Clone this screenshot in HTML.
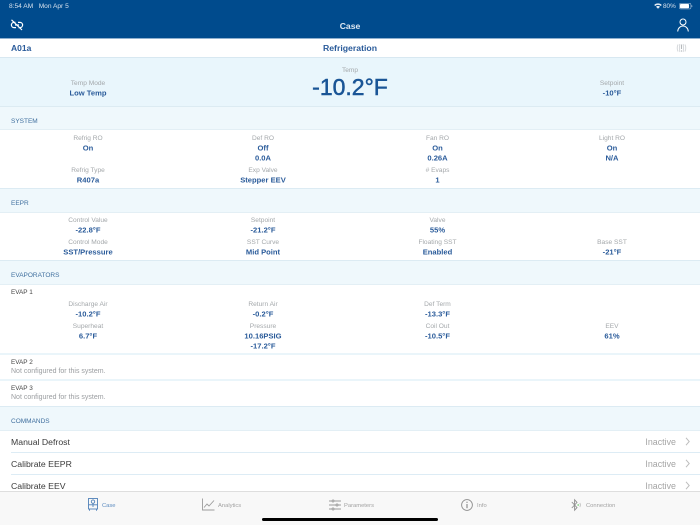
<!DOCTYPE html>
<html><head><meta charset="utf-8"><title>Case</title>
<style>
html,body{margin:0;padding:0;width:700px;height:525px;overflow:hidden;background:#fff}
body{position:relative;font-family:"Liberation Sans",sans-serif;filter:blur(.3px)}
.b{position:absolute;left:0;width:700px}
.t{position:absolute;white-space:nowrap;line-height:12px;height:12px}
.l{width:160px;margin-left:-80px;text-align:center;font-size:6.6px;color:#a4a8ab}
.v{width:160px;margin-left:-80px;text-align:center;font-size:7.6px;font-weight:bold;color:#2a5b9a;transform:translateY(.5px)}
.s{left:11px;font-size:6.5px;color:#41709f;transform:translateY(1px)}
.e{left:11px;font-size:6.4px;color:#444}
.n{left:11px;font-size:7px;color:#9a9da0}
.c{left:11px;font-size:8.7px;color:#3a3a3a}
.i{left:600px;width:76px;text-align:right;font-size:8.9px;color:#a5a5a5}
.tab{font-size:5.8px;color:#a2a2a2;transform:translateY(1px)}
svg{position:absolute;overflow:visible}
</style></head><body>
<div class="b" style="top:0;height:38px;background:#004b8d"></div>
<div class="b" style="top:38px;height:1px;background:#8fb0cf"></div>
<div class="b" style="top:39px;height:18px;background:#fff"></div>
<div class="b" style="top:57px;height:1px;background:#d8e8f1"></div>
<div class="b" style="top:58px;height:48px;background:#e9f6fc"></div>
<div class="b" style="top:106px;height:1px;background:#dcebf2"></div>
<div class="b" style="top:107px;height:22px;background:#eff8fc"></div>
<div class="b" style="top:129px;height:1px;background:#e3eff5"></div>
<div class="b" style="top:130px;height:58px;background:#fff"></div>
<div class="b" style="top:188px;height:1px;background:#dcebf3"></div>
<div class="b" style="top:189px;height:23px;background:#eff8fc"></div>
<div class="b" style="top:212px;height:1px;background:#e3eff5"></div>
<div class="b" style="top:260px;height:1px;background:#dcebf3"></div>
<div class="b" style="top:261px;height:23px;background:#eff8fc"></div>
<div class="b" style="top:284px;height:1px;background:#e3eff5"></div>
<div class="b" style="top:353px;height:2px;background:#eaf5fa"></div>
<div class="b" style="top:379px;height:2px;background:#eaf5fa"></div>
<div class="b" style="top:406px;height:1px;background:#dcebf3"></div>
<div class="b" style="top:407px;height:23px;background:#eff8fc"></div>
<div class="b" style="top:430px;height:1px;background:#e3eff5"></div>
<div class="b" style="top:452px;left:11px;width:689px;height:1px;background:#ddecf5"></div>
<div class="b" style="top:474px;left:11px;width:689px;height:1px;background:#ddecf5"></div>
<div class="b" style="top:491px;height:34px;background:#f8f8f8;border-top:1px solid #dedede;box-sizing:border-box"></div>

<!-- status bar -->
<div class="t" style="left:9px;top:0.5px;font-size:6.6px;color:#d5e0ec">8:54 AM&nbsp;&nbsp;&nbsp;Mon Apr 5</div>
<div class="t" style="left:663px;top:0.5px;font-size:6.4px;color:#d5e0ec">80%</div>
<svg style="left:654px;top:3px" width="8" height="6" viewBox="0 0 8 6"><path d="M0.2 2 A5.4 5.4 0 0 1 7.8 2 L6.8 3 A4 4 0 0 0 1.2 3Z M2 3.7 A2.8 2.8 0 0 1 6 3.7 L4 5.8Z" fill="#e4ebf3"/></svg>
<svg style="left:679px;top:3px" width="14" height="7" viewBox="0 0 14 7"><rect x=".3" y=".3" width="11.6" height="5.6" rx="1.4" fill="none" stroke="#9db8d3" stroke-width=".6"/><rect x="1" y="1" width="9" height="4.2" rx=".8" fill="#fff"/><path d="M12.6 2.2 q.8.9 0 1.8" fill="none" stroke="#9db8d3" stroke-width=".7"/></svg>

<!-- nav -->
<svg style="left:10px;top:19px" width="14" height="12" viewBox="0 0 14 12" fill="none" stroke="#fff" stroke-width="1.2"><path d="M5.5 3.4 H4 A2.6 2.6 0 0 0 4 8.6 H6 M8 3.4 H10 A2.6 2.6 0 0 1 10 8.6 H8.5 M5 6 H9"/><path d="M1.5 .8 L12 11"/></svg>
<div class="t" style="left:300px;width:100px;text-align:center;top:20px;font-size:8.6px;font-weight:bold;color:#dfe8f2">Case</div>
<svg style="left:677px;top:18px" width="12" height="14" viewBox="0 0 12 14" fill="none" stroke="#fff" stroke-width="1"><circle cx="6" cy="4" r="3"/><path d="M.7 13.5 C1 9.8 3.5 8 6 8 C8.5 8 11 9.8 11.3 13.5"/></svg>

<!-- title row -->
<div class="t" style="left:11px;top:42px;font-size:8.5px;font-weight:bold;color:#2a5b9a">A01a</div>
<div class="t" style="left:250px;width:200px;text-align:center;top:42px;font-size:8.7px;font-weight:bold;color:#2a5b9a">Refrigeration</div>
<svg style="left:676px;top:43px" width="11" height="10" viewBox="0 0 11 10" fill="none" stroke="#d6d9dc" stroke-width="1"><path d="M2 1.5 Q.5 5 2 8.5 M9 1.5 Q10.5 5 9 8.5 M3.8 1 Q3 5 3.8 9 M7.2 1 Q8 5 7.2 9"/><path d="M5.5 1.5 V6 M5.5 7.4 V8.6" stroke="#b5b9bc" stroke-width="1.1"/></svg>

<!-- hero -->
<div class="t l" style="left:88px;top:78px">Temp Mode</div>
<div class="t v" style="left:88px;top:86.5px">Low Temp</div>
<div class="t l" style="left:350px;top:65px">Temp</div>
<div class="t" style="left:250px;width:200px;text-align:center;top:81px;font-size:23px;color:#1a5596;-webkit-text-stroke:.5px #1a5596">-10.2°F</div>
<div class="t l" style="left:612px;top:78px">Setpoint</div>
<div class="t v" style="left:612px;top:86.5px">-10°F</div>

<div class="t s" style="top:114.5px">SYSTEM</div>
<div class="t l" style="left:88px;top:133px">Refrig RO</div>
<div class="t v" style="left:88px;top:142px">On</div>
<div class="t l" style="left:263px;top:133px">Def RO</div>
<div class="t v" style="left:263px;top:141.5px">Off</div>
<div class="t v" style="left:263px;top:151.5px">0.0A</div>
<div class="t l" style="left:437.5px;top:133px">Fan RO</div>
<div class="t v" style="left:437.5px;top:141.5px">On</div>
<div class="t v" style="left:437.5px;top:151.5px">0.26A</div>
<div class="t l" style="left:612px;top:133px">Light RO</div>
<div class="t v" style="left:612px;top:141.5px">On</div>
<div class="t v" style="left:612px;top:151.5px">N/A</div>
<div class="t l" style="left:88px;top:165px">Refrig Type</div>
<div class="t v" style="left:88px;top:174px">R407a</div>
<div class="t l" style="left:263px;top:165px">Exp Valve</div>
<div class="t v" style="left:263px;top:173.5px">Stepper EEV</div>
<div class="t l" style="left:437.5px;top:165px"># Evaps</div>
<div class="t v" style="left:437.5px;top:173.5px">1</div>

<div class="t s" style="top:196.5px">EEPR</div>
<div class="t l" style="left:88px;top:215px">Control Value</div>
<div class="t v" style="left:88px;top:223.5px">-22.8°F</div>
<div class="t l" style="left:263px;top:215px">Setpoint</div>
<div class="t v" style="left:263px;top:223.5px">-21.2°F</div>
<div class="t l" style="left:437.5px;top:215px">Valve</div>
<div class="t v" style="left:437.5px;top:223.5px">55%</div>
<div class="t l" style="left:88px;top:237px">Control Mode</div>
<div class="t v" style="left:88px;top:245.5px">SST/Pressure</div>
<div class="t l" style="left:263px;top:237px">SST Curve</div>
<div class="t v" style="left:263px;top:245.5px">Mid Point</div>
<div class="t l" style="left:437.5px;top:237px">Floating SST</div>
<div class="t v" style="left:437.5px;top:245.5px">Enabled</div>
<div class="t l" style="left:612px;top:237px">Base SST</div>
<div class="t v" style="left:612px;top:245.5px">-21°F</div>

<div class="t s" style="top:268.5px">EVAPORATORS</div>
<div class="t e" style="top:286.5px">EVAP 1</div>
<div class="t l" style="left:88px;top:299px">Discharge Air</div>
<div class="t v" style="left:88px;top:308px">-10.2°F</div>
<div class="t l" style="left:263px;top:299px">Return Air</div>
<div class="t v" style="left:263px;top:308px">-0.2°F</div>
<div class="t l" style="left:437.5px;top:299px">Def Term</div>
<div class="t v" style="left:437.5px;top:308px">-13.3°F</div>
<div class="t l" style="left:88px;top:321px">Superheat</div>
<div class="t v" style="left:88px;top:329.5px">6.7°F</div>
<div class="t l" style="left:263px;top:321px">Pressure</div>
<div class="t v" style="left:263px;top:329.5px">10.16PSIG</div>
<div class="t v" style="left:263px;top:340px">-17.2°F</div>
<div class="t l" style="left:437.5px;top:321px">Coil Out</div>
<div class="t v" style="left:437.5px;top:329.5px">-10.5°F</div>
<div class="t l" style="left:612px;top:321px">EEV</div>
<div class="t v" style="left:612px;top:329.5px">61%</div>

<div class="t e" style="top:357px">EVAP 2</div>
<div class="t n" style="top:366px">Not configured for this system.</div>
<div class="t e" style="top:383px">EVAP 3</div>
<div class="t n" style="top:392px">Not configured for this system.</div>

<div class="t s" style="top:414.5px">COMMANDS</div>
<div class="t c" style="top:435.5px">Manual Defrost</div>
<div class="t i" style="top:435.5px">Inactive</div>
<div class="t c" style="top:457.5px">Calibrate EEPR</div>
<div class="t i" style="top:457.5px">Inactive</div>
<div class="t c" style="top:479.5px">Calibrate EEV</div>
<div class="t i" style="top:479.5px">Inactive</div>
<svg style="left:685px;top:437px" width="5" height="9" viewBox="0 0 5 9" fill="none" stroke="#bdbdbd" stroke-width="1"><path d="M1 .8 L4.2 4.5 L1 8.2"/></svg>
<svg style="left:685px;top:459px" width="5" height="9" viewBox="0 0 5 9" fill="none" stroke="#bdbdbd" stroke-width="1"><path d="M1 .8 L4.2 4.5 L1 8.2"/></svg>
<svg style="left:685px;top:481px" width="5" height="9" viewBox="0 0 5 9" fill="none" stroke="#bdbdbd" stroke-width="1"><path d="M1 .8 L4.2 4.5 L1 8.2"/></svg>

<!-- tabs -->
<svg style="left:88px;top:498px" width="10" height="13" viewBox="0 0 10 13" fill="none" stroke="#4f80b8" stroke-width=".9"><rect x=".5" y=".5" width="9" height="10.5"/><path d="M.5 6.8 H9.5"/><circle cx="5" cy="3.6" r="1.7"/><path d="M5 5.3 V9 M1.5 11 V12.8 M8.5 11 V12.8"/></svg>
<div class="t tab" style="left:102px;top:499px;color:#5d8cc0">Case</div>
<svg style="left:202px;top:498px" width="13" height="13" viewBox="0 0 13 13" fill="none" stroke="#9b9b9b" stroke-width=".9"><path d="M.5 .5 V12 H12.5"/><path d="M2 9.5 L5 6 L7 8 L12 2.5"/></svg>
<div class="t tab" style="left:218px;top:499px">Analytics</div>
<svg style="left:329px;top:498.5px" width="12" height="12" viewBox="0 0 12 12" fill="none" stroke="#9b9b9b" stroke-width=".9"><path d="M0 2 H12 M0 6 H12 M0 10 H12"/><circle cx="4" cy="2" r="1" fill="#f8f8f8"/><circle cx="8" cy="6" r="1" fill="#f8f8f8"/><circle cx="4" cy="10" r="1" fill="#f8f8f8"/></svg>
<div class="t tab" style="left:344px;top:499px">Parameters</div>
<svg style="left:461px;top:499px" width="12" height="12" viewBox="0 0 12 12" fill="none" stroke="#8f8f8f" stroke-width=".9"><circle cx="6" cy="6" r="5.4"/><path d="M6 5 V9.2" stroke-width="1.2"/><path d="M6 2.7 V3.9" stroke-width="1.2"/></svg>
<div class="t tab" style="left:477px;top:499px">Info</div>
<svg style="left:571px;top:499px" width="12" height="12" viewBox="0 0 12 12" fill="none" stroke="#8f8f8f" stroke-width=".9"><path d="M.8 3 L6 8.6 L3.6 11.2 V.8 L6 3.4 L.8 9"/><circle cx="7.2" cy="6" r=".9" fill="#7fd07f" stroke="none"/><path d="M8.8 4 Q10 6 8.8 8" stroke="#c0c0c0"/></svg>
<div class="t tab" style="left:586px;top:499px">Connection</div>
<div style="position:absolute;left:262px;top:518px;width:176px;height:3px;border-radius:2px;background:#000"></div>
</body></html>
